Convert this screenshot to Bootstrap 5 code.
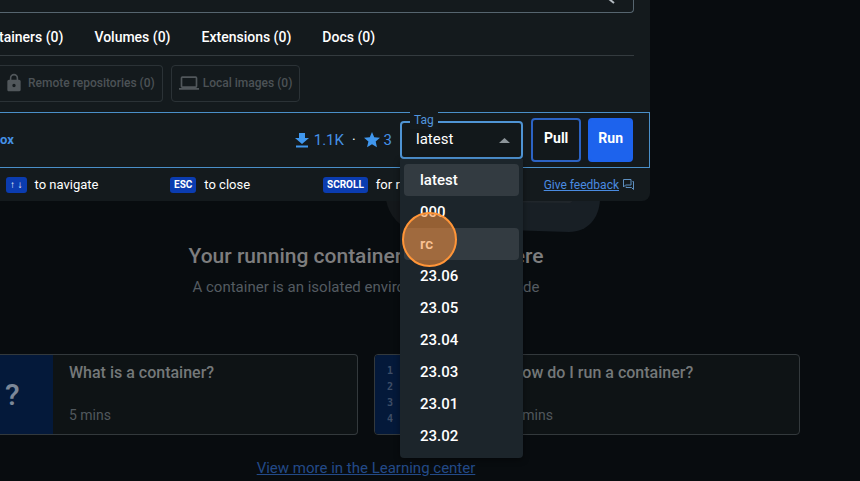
<!DOCTYPE html>
<html lang="en" data-bs-theme="dark">
<head>
<meta charset="utf-8">
<meta name="viewport" content="width=device-width, initial-scale=1">
<title>Docker Desktop search</title>
<link href="https://cdn.jsdelivr.net/npm/bootstrap@5.3.0/dist/css/bootstrap.min.css" rel="stylesheet">
<style>
body{background:#080c0f;font-family:Roboto,"Noto Sans",sans-serif;font-size:14px;line-height:20px;color:#fff;overflow:hidden}
svg{display:block;flex:none}
/* page behind the dialog */
.backdrop-page{padding-top:200px;color:#75797c}
.centred-copy{padding-right:128px}
.hero-art{margin-left:384px}
.page-title{font-size:21px;line-height:28px;font-weight:500;margin:9px 0 7px;color:#7d7d7e}
.page-sub{color:#545b61;font-size:15px;margin:0 0 57px}
.guides{display:grid;grid-template-columns:358fr 426fr;gap:16px;padding-right:60px;margin-bottom:23px}
.guide{display:flex;background:#0e1315;border:1px solid #33393c;border-radius:4px;height:81px;overflow:hidden}
.guide-first{border-left:0;border-radius:0 4px 4px 0}
.guide-art{background:#04193a;width:120px;flex:none}
.guide-first .guide-art{width:53px;font-size:30px;line-height:80px;font-weight:500;color:#7c8798;padding-left:5px}
.line-nums{font:700 10px/16px "DejaVu Sans Mono",monospace;color:#3d4d66;padding:8px 12px;margin:0;list-style:none}
.guide-title{font-size:16px;line-height:24px;font-weight:500;margin:0 0 20px;color:#747879}
.guide-time{color:#51585d;margin:0}
.guide-body{padding:6px 16px}
.more-link{color:#234a88;font-size:15px}
/* dialog */
.search-dialog{position:absolute;top:0;left:0;width:100%;max-width:650px;background:#141a1d;border-radius:0 0 8px 0}
.search-field{height:13px;border:1px solid #56656f;border-width:0 1px 1px 0;border-radius:0 0 4px 0;background:#141a1d;padding:0}
.search-wrap{position:relative;padding-right:16px}
.search-mark{position:absolute;right:34px;top:0}
.type-tabs{display:flex;gap:31px;height:43px;margin:0 16px 9px -1px;border-bottom:1px solid #343b3f}
.type-tabs a{color:#fff;text-decoration:none;font-weight:500;line-height:48px}
.chip-btn{height:37px;border:1px solid #2b3236;border-radius:4px;background:none;color:#4c5256;font-size:12px;font-weight:500;display:flex;align-items:center;gap:4px;padding:0 7px 1px}
.chip-cut{border-left:0;border-radius:0 4px 4px 0;padding-left:4px}
.result{height:56px;margin-top:10px;border:1px solid #4a8fc8;border-left:0;padding-right:16px;display:flex;align-items:center}
.result a,.stat{color:#4591e6}
.result a{font-size:13px;font-weight:700;text-decoration:none}
.stat{display:flex;align-items:center;font-size:15px}
.tag-box{position:relative;width:123px;margin:0 8px}
.tag-box select{display:block;width:100%;height:38px;border:2px solid #4f94d4;border-radius:4px;background:#12181b;color:#fff;appearance:none;font-size:15px;line-height:20px;padding:0 14px 2px;outline:0}
.tag-box label{position:absolute;left:10px;top:-10px;padding:0 4px;font-size:12px;line-height:18px;color:#5194dc;background:#141a1d}
.tag-caret{position:absolute;right:13px;top:16px}
.tag-menu{position:absolute;top:100%;left:0;width:100%;background:#1c252b;border-radius:0 0 4px 4px;padding:5px 4px 6px;z-index:3;box-shadow:0 2px 6px #0006}
.tag-menu button{display:block;width:100%;height:32px;border:0;border-radius:4px;background:none;color:#fff;font-size:15px;font-weight:500;line-height:20px;text-align:left;padding:0 16px 1px}
.tag-menu .lit{background:#333b41}
.click-ring{position:absolute;left:2px;top:53px;width:55px;height:55px;border:2px solid #ff9538;border-radius:50%;background:#fa913c8c;pointer-events:none}
.act{height:44px;border:2px solid #2c63c4;border-radius:4px;background:#12181b;color:#fff;font-weight:700;font-size:14px;padding:0 11px 4px}
.act-run{background:#1d63ed;border-color:#1d63ed;padding:0 8px 4px;margin-left:7px}
.hints{height:33px;padding:0 16px 0 6px;display:flex;align-items:center;font-size:13px}
.hints kbd{display:inline-block;background:#0b3cb0;color:#fff;font:700 10px/16px Roboto,sans-serif;border-radius:3px;padding:0 4px;margin-right:8px;vertical-align:1px}
.hint-nav{width:164px}.hint-esc{width:153px}
.hints a{color:#4a8be0;font-size:12px}
</style>
<script src="https://cdn.jsdelivr.net/npm/bootstrap@5.3.0/dist/js/bootstrap.bundle.min.js"></script>
</head>
<body>
<main class="backdrop-page">
  <svg class="hero-art" width="220" height="33" aria-hidden="true"><path d="M2 0h90v32H33Q7 25 2 0z" fill="#14181b"/><path d="M90 0h126c-1 18-12 32-31 32L90 29z" fill="#181f25"/><path d="M90 0h100l-4 3-96-1z" fill="#20262b"/></svg>
  <div class="centred-copy text-center">
    <h1 class="page-title">Your running containers show up here</h1>
    <p class="page-sub">A container is an isolated environment for your code</p>
  </div>
  <section class="guides">
    <article class="guide guide-first">
      <div class="guide-art">?</div>
      <div class="guide-body"><h2 class="guide-title">What is a container?</h2><p class="guide-time">5 mins</p></div>
    </article>
    <article class="guide">
      <ol class="guide-art line-nums"><li>1</li><li>2</li><li>3</li><li>4</li></ol>
      <div class="guide-body"><h2 class="guide-title">How do I run a container?</h2><p class="guide-time">6 mins</p></div>
    </article>
  </section>
  <div class="centred-copy text-center"><a class="more-link" href="#">View more in the Learning center</a></div>
</main>

<section class="search-dialog" role="dialog" aria-label="Search">
  <div class="search-wrap">
    <input class="search-field d-block w-100" type="search" aria-label="Search">
    <svg class="search-mark" width="8" height="4" aria-hidden="true"><path d="M1-1l5 4" stroke="#b5bcc2" stroke-width="2"/></svg>
  </div>
  <nav class="type-tabs"><a href="#">tainers (0)</a><a href="#">Volumes (0)</a><a href="#">Extensions (0)</a><a href="#">Docs (0)</a></nav>
  <div class="d-flex gap-2">
    <button class="chip-btn chip-cut" type="button"><svg width="20" height="20" viewBox="0 0 24 24" fill="#51575b"><path d="M18 8h-1V6A5 5 0 0 0 7 6v2H6a2 2 0 0 0-2 2v10c0 1.100.9 2 2 2h12a2 2 0 0 0 2-2V10a2 2 0 0 0-2-2zm-6 9a2 2 0 1 1 0-4 2 2 0 0 1 0 4zm3.100-9H8.900V6a3.100 3.100 0 0 1 6.200 0z"/></svg>Remote repositories (0)</button>
    <button class="chip-btn" type="button"><svg width="20" height="20" viewBox="0 0 24 24" fill="#51575b"><path d="M20 18a2 2 0 0 0 2-2V6a2 2 0 0 0-2-2H4a2 2 0 0 0-2 2v10c0 1.100.9 2 2 2H0v2h24v-2zM4 6h16v10H4z"/></svg>Local images (0)</button>
  </div>
  <div class="result">
    <a href="#">ox</a>
    <span class="stat ms-auto"><svg class="me-1" width="16" height="16" viewBox="0 0 16 16" fill="#4097ee"><path d="M5 1h6v5h4l-7 6-7-6h4zM2 13.500h12v2H2z"/></svg>1.1K</span>
    <span class="mx-2">·</span>
    <span class="stat"><svg class="me-1" width="16" height="16" viewBox="2 2 20 20" fill="#4097ee"><path d="M12 17.300l6.200 3.700-1.600-7L22 9.200l-7.200-.6L12 2 9.200 8.600 2 9.200 7.500 14l-1.700 7z"/></svg>3</span>
    <div class="tag-box">
      <select id="tag"><option>latest</option><option>000</option><option>rc</option><option>23.06</option></select>
      <label for="tag">Tag</label>
      <svg class="tag-caret" width="11" height="6" aria-hidden="true"><path d="M0 6l5.500-5L11 6z" fill="#8c9499"/></svg>
      <div class="tag-menu">
        <button class="lit" type="button">latest</button><button type="button">000</button><button class="lit" type="button">rc</button><button type="button">23.06</button><button type="button">23.05</button><button type="button">23.04</button><button type="button">23.03</button><button type="button">23.01</button><button type="button">23.02</button>
        <span class="click-ring"></span>
      </div>
    </div>
    <button class="act" type="button">Pull</button><button class="act act-run" type="button">Run</button>
  </div>
  <div class="hints">
    <span class="hint-nav"><kbd>↑ ↓</kbd>to navigate</span><span class="hint-esc"><kbd>ESC</kbd>to close</span><span><kbd>SCROLL</kbd>for results</span>
    <a class="ms-auto" href="#">Give feedback</a>
    <svg class="ms-1" width="11" height="11" viewBox="0 0 22 22" fill="none" stroke="#5d8fc0" stroke-width="2"><path d="M1 16V1h15v11H5zM19 5h2v16l-4-4H6v-2"/></svg>
  </div>
</section>
</body>
</html>
